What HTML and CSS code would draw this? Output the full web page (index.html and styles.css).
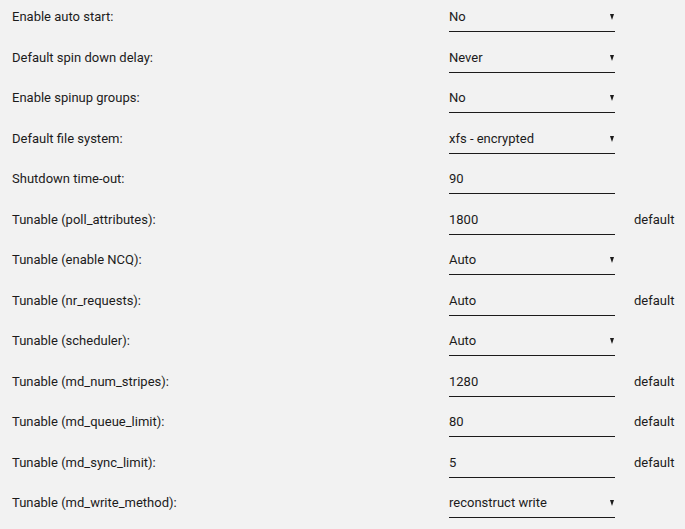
FILE: index.html
```html
<!DOCTYPE html>
<html lang="en">
  <head>
    <meta charset="UTF-8" />
    <meta name="viewport" content="width=device-width, initial-scale=1.0" />
    <title>Disk Settings</title>
    <link rel="stylesheet" href="styles.css">
  </head>
  <body>
    <form class="settings">
      <div class="row">
        <span class="label">Enable auto start:</span>
        <span class="field select">No</span>
      </div>
      <div class="row">
        <span class="label">Default spin down delay:</span>
        <span class="field select">Never</span>
      </div>
      <div class="row">
        <span class="label">Enable spinup groups:</span>
        <span class="field select">No</span>
      </div>
      <div class="row">
        <span class="label">Default file system:</span>
        <span class="field select">xfs - encrypted</span>
      </div>
      <div class="row">
        <span class="label">Shutdown time-out:</span>
        <span class="field text">90</span>
      </div>
      <div class="row">
        <span class="label">Tunable (poll_attributes):</span>
        <span class="field text">1800</span>
        <span class="hint">default</span>
      </div>
      <div class="row">
        <span class="label">Tunable (enable NCQ):</span>
        <span class="field select">Auto</span>
      </div>
      <div class="row">
        <span class="label">Tunable (nr_requests):</span>
        <span class="field text">Auto</span>
        <span class="hint">default</span>
      </div>
      <div class="row">
        <span class="label">Tunable (scheduler):</span>
        <span class="field select">Auto</span>
      </div>
      <div class="row">
        <span class="label">Tunable (md_num_stripes):</span>
        <span class="field text">1280</span>
        <span class="hint">default</span>
      </div>
      <div class="row">
        <span class="label">Tunable (md_queue_limit):</span>
        <span class="field text">80</span>
        <span class="hint">default</span>
      </div>
      <div class="row">
        <span class="label">Tunable (md_sync_limit):</span>
        <span class="field text">5</span>
        <span class="hint">default</span>
      </div>
      <div class="row">
        <span class="label">Tunable (md_write_method):</span>
        <span class="field select">reconstruct write</span>
      </div>
    </form>
  </body>
</html>
```

FILE: styles.css
```css
body {
  margin: 0;
  background: #f2f2f2;
  color: #1c1b1b;
  font-family: Roboto, sans-serif;
  font-size: 13px;
}
.settings {
  padding-left: 12px;
}
.row {
  display: grid;
  grid-template-columns: 437px 166px auto;
  align-items: start;
  height: 40.5px;
  padding-top: 3px;
  box-sizing: border-box;
}
.label,
.hint {
  line-height: 18px;
  padding-top: 5px;
}
.field {
  position: relative;
  display: block;
  line-height: 18px;
  padding: 5px 0 5px;
  border-bottom: 1px solid #1c1b1b;
}
/* little down-arrow on dropdowns */
.field.select::after {
  content: "";
  position: absolute;
  right: 1px;
  top: 11px;
  border-left: 2.5px solid transparent;
  border-right: 2.5px solid transparent;
  border-top: 6px solid #1c1b1b;
}
.hint {
  padding-left: 19px;
}
```
